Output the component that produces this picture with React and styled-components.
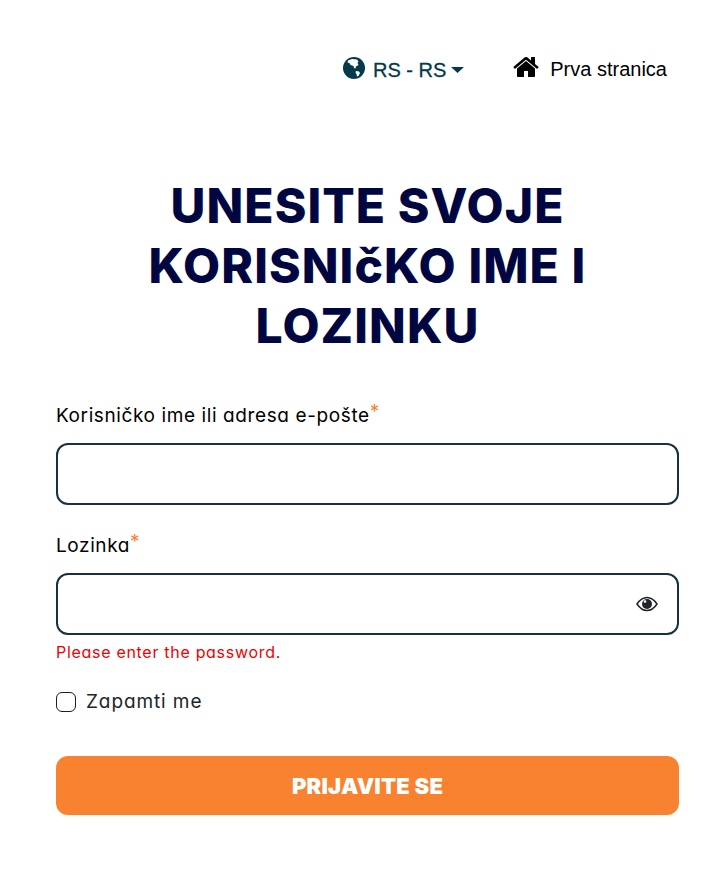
import styled, { createGlobalStyle } from 'styled-components'

const GlobalStyle = createGlobalStyle`
body {
    margin: 0;
    background: #fff;
    font-family: Inter, "Liberation Sans", sans-serif;
    font-feature-settings: "cv11";
}
`

const Page = styled.div`
width: 724px;
height: 870px;
box-sizing: border-box;
padding: 0 45px 0 56px;
overflow: hidden;
`

const TopBar = styled.div`
display: flex;
justify-content: flex-end;
align-items: center;
height: 138px;
padding: 0 12px 0 0;
box-sizing: border-box;
font-family: "Liberation Sans", Arial, sans-serif;
font-size: 20px;
`

const TopLink = styled.a`
display: flex;
align-items: center;
color: ${p => p.$color};
margin-left: ${p => p.$gap}px;
`

const RegionText = styled.span`
font-weight: 500;
-webkit-text-stroke: 0.3px #043a4a;
margin-top: 2px;
`

const Heading = styled.h1`
margin: 0;
width: 100%;
text-align: center;
color: #000640;
font-size: 48px;
font-weight: 850;
line-height: 60px;
letter-spacing: 1.1px;
padding: 38px 0 0;
height: 265px;
box-sizing: border-box;
`

const Field = styled.div`
display: flex;
flex-direction: column;
margin-top: ${p => p.$top || 0}px;
`

const Label = styled.label`
font-size: 19px;
line-height: 26px;
color: #000;
letter-spacing: 0.6px;
margin-bottom: 14px;
`

const Star = styled.sup`
color: #f9812e;
font-size: 19px;
line-height: 0;
vertical-align: 4px;
`

const InputBox = styled.div`
position: relative;
height: 62px;
box-sizing: border-box;
border: 2px solid #15323e;
border-radius: 12px;
display: flex;
align-items: center;
justify-content: flex-end;
padding-right: 19px;
`

const ErrorText = styled.div`
color: #f00000;
font-size: 16px;
line-height: 24px;
letter-spacing: 0.7px;
margin-top: 5px;
`

const Remember = styled.label`
display: flex;
align-items: center;
gap: 10px;
color: #212529;
font-size: 19px;
letter-spacing: 0.9px;
margin: 26px 0 43px;
`

const Box = styled.span`
width: 18px;
height: 18px;
border: 1px solid #15202b;
border-radius: 6px;
`

const Submit = styled.button`
display: block;
width: 100%;
height: 59px;
border: 0;
border-radius: 12px;
background: #f8822f;
color: #fff;
font-family: Inter, sans-serif;
font-size: 22px;
font-weight: 900;
letter-spacing: 0.2px;
`

const Eye = () => (
    <svg width="22" height="16" viewBox="0 0 22 16">
        <path d="M1 8C4 3.5 7.5 1.5 11 1.5S18 3.5 21 8c-3 4.5-6.500 6.500-10 6.500S4 12.500 1 8Z" fill="none" stroke="#212529" strokeWidth="1.500" />
        <circle cx="11" cy="8" r="5" fill="#212529" />
        <circle cx="9" cy="5.500" r="1.300" fill="#fff" />
    </svg>
)

const HomeIcon = () => (
    <svg width="28" height="28" viewBox="0 0 1792 1792" style={{ marginRight: 9, marginTop: -5 }}>
        <path d="M1408 992v480q0 26-19 45t-45 19h-384v-384h-256v384h-384q-26 0-45-19t-19-45v-480q0-1 .5-3t.5-3l575-474 575 474q1 2 1 6zm223-69l-62 74q-8 9-21 11h-3q-13 0-21-7l-692-577-692 577q-12 8-24 7-13-2-21-11l-62-74q-8-10-7-23.500t11-21.500l719-599q32-26 76-26t76 26l244 204v-195q0-14 9-23t23-9h192q14 0 23 9t9 23v408l219 182q10 8 11 21.500t-7 23.500z" />
    </svg>
)

const GlobeIcon = () => (
    <svg width="22" height="22" viewBox="0 0 22 22" style={{ marginRight: 8, marginTop: -3 }}>
        <circle cx="11" cy="11" r="11" fill="#043a4a" />
        <path d="M5 3.500 9 2l5 .5 1.500 2-1 1.500 1 2-2.500 1.500-.5 2-1.500-.5-.5-2-3-1-1-2-2-.5Z" fill="#fff" />
        <path d="M13 14l3 .5 1 1.500-1.500 3-1.500.5-.5-2.500-1-1.500Z" fill="#fff" />
    </svg>
)

const Caret = () => (
    <svg width="13" height="6" viewBox="0 0 13 6" style={{ marginLeft: 5, marginTop: 2 }}>
        <path d="M0 0h13L6.500 6Z" fill="#043a4a" />
    </svg>
)

const App = () => (
    <>
        <GlobalStyle />
        <Page>
            <TopBar>
                <TopLink $color="#043a4a">
                    <GlobeIcon />
                    <RegionText>RS - RS</RegionText>
                    <Caret />
                </TopLink>
                <TopLink $color="#000" $gap={49}>
                    <HomeIcon />
                    <span>Prva stranica</span>
                </TopLink>
            </TopBar>
            <Heading>UNESITE SVOJE KORISNIčKO IME I LOZINKU</Heading>
            <Field>
                <Label>Korisničko ime ili adresa e-pošte<Star>*</Star></Label>
                <InputBox />
            </Field>
            <Field $top={28}>
                <Label>Lozinka<Star>*</Star></Label>
                <InputBox><Eye /></InputBox>
                <ErrorText>Please enter the password.</ErrorText>
            </Field>
            <Remember><Box />Zapamti me</Remember>
            <Submit>PRIJAVITE SE</Submit>
        </Page>
    </>
)

export default App
